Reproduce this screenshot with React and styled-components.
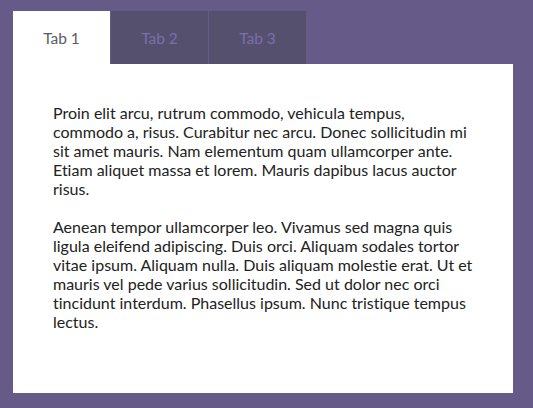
import React, { useState } from "react";
import styled, { createGlobalStyle } from "styled-components";

const GlobalStyle = createGlobalStyle`
  html, body {
    margin: 0;
    background: #665b88;
  }
  body {
    font-family: Lato, "Open Sans", sans-serif;
    font-variant-ligatures: none;
  }
`;

const tabs = [
  {
    label: "Tab 1",
    paragraphs: [
      "Proin elit arcu, rutrum commodo, vehicula tempus, commodo a, risus. Curabitur nec arcu. Donec sollicitudin mi sit amet mauris. Nam elementum quam ullamcorper ante. Etiam aliquet massa et lorem. Mauris dapibus lacus auctor risus.",
      "Aenean tempor ullamcorper leo. Vivamus sed magna quis ligula eleifend adipiscing. Duis orci. Aliquam sodales tortor vitae ipsum. Aliquam nulla. Duis aliquam molestie erat. Ut et mauris vel pede varius sollicitudin. Sed ut dolor nec orci tincidunt interdum. Phasellus ipsum. Nunc tristique tempus lectus.",
    ],
  },
  { label: "Tab 2", paragraphs: [] },
  { label: "Tab 3", paragraphs: [] },
];

const App = () => {
  const [active, setActive] = useState(0);

  return (
    <Wrapper>
      <GlobalStyle />
      <TabList>
        {tabs.map((tab, i) => (
          <Tab key={tab.label} $active={i === active} onClick={() => setActive(i)}>
            {tab.label}
          </Tab>
        ))}
      </TabList>
      <Panel>
        {tabs[active].paragraphs.map((text, i) => (
          <Paragraph key={i}>{text}</Paragraph>
        ))}
      </Panel>
    </Wrapper>
  );
};

export default App;

const Wrapper = styled.div`
  width: 500px;
  padding: 11px 0 0 13px;
`;

const TabList = styled.div`
  display: flex;
  gap: 1px;
`;

const Tab = styled.button`
  width: 97px;
  height: 53px;
  border: none;
  padding: 0;
  font-family: Lato, "Open Sans", sans-serif;
  font-size: 15.5px;
  font-variant-ligatures: none;
  cursor: pointer;
  background: ${({ $active }) => ($active ? "#ffffff" : "#55506e")};
  color: ${({ $active }) => ($active ? "#5b5b66" : "#7a6fab")};
`;

const Panel = styled.div`
  background: #ffffff;
  height: 329px;
  box-sizing: border-box;
  padding: 39px 40px 0;
`;

const Paragraph = styled.p`
  margin: 0 0 19px;
  font-size: 16px;
  line-height: 19px;
  color: #222222;
`;
